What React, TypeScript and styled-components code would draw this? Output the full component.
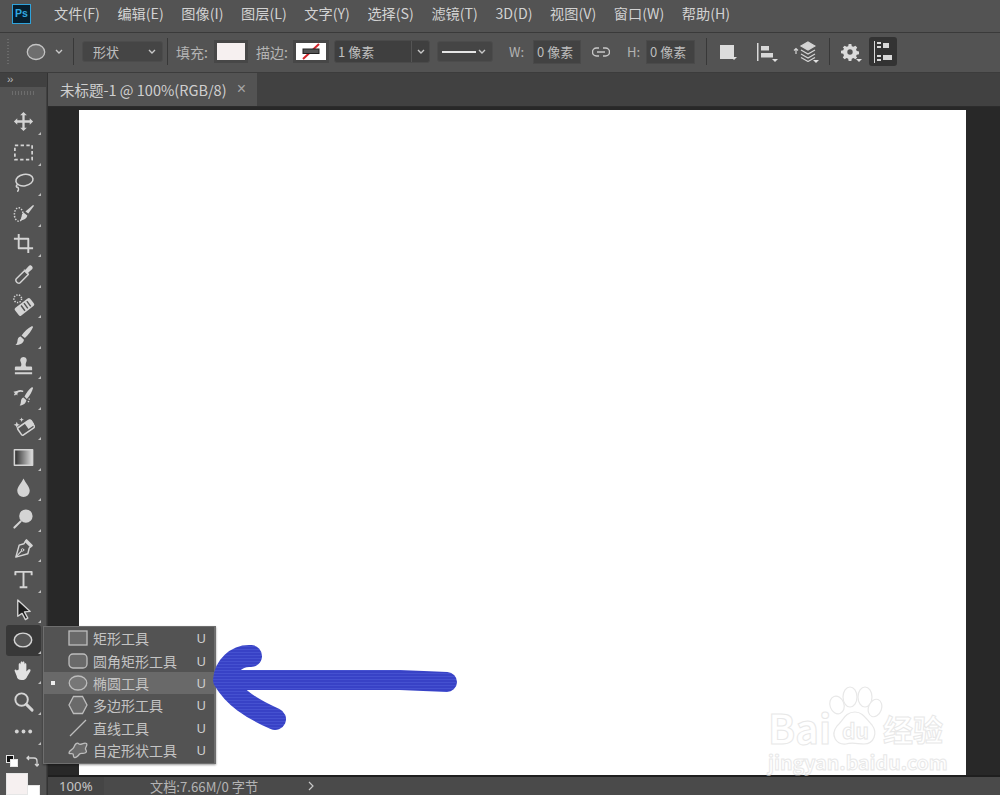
import React from "react";
import styled, { createGlobalStyle } from "styled-components";

const GlobalStyle = createGlobalStyle`
  html, body {
    margin: 0;
    padding: 0;
    background: #535353;
  }
  * {
    box-sizing: border-box;
  }
`;

const CJK = `"Noto Sans CJK SC", "Noto Sans", sans-serif`;
const ICON = "#d4d4d4";

const Window = styled("div")`
  position: relative;
  width: 1000px;
  height: 795px;
  overflow: hidden;
  display: flex;
  flex-direction: column;
  background: #535353;
  font-family: ${CJK};
  color: #cfcfcf;
`;

/* ---- menu ---- */
const MenuBar = styled("div")`
  height: 33px;
  flex: none;
  display: flex;
  align-items: center;
  padding-left: 12px;
  border-bottom: 1px solid #3a3a3a;
`;

const Logo = styled("div")`
  width: 19px;
  height: 20px;
  margin-right: 23px;
  margin-top: -5px;
  border: 1.5px solid #2fa3dc;
  background: #061e2e;
  color: #31a8e0;
  font: bold 10.5px/17px "Liberation Sans", sans-serif;
  text-align: center;
`;

const MenuItem = styled("span")`
  margin-right: 17.6px;
  font-size: 14.2px;
  line-height: 28px;
  margin-top: -6px;
  white-space: nowrap;
  color: #d2d2d2;
`;

/* ---- options bar ---- */
const OptionsBar = styled("div")`
  height: 40px;
  flex: none;
  display: flex;
  align-items: center;
  position: relative;
  padding-bottom: 2px;
  border-bottom: 1px solid #3c3c3c;
  font-size: 13px;
`;

const Slot = styled("div")<{ $x: number; $w: number }>`
  flex: none;
  margin-left: ${(p) => p.$x}px;
  width: ${(p) => p.$w}px;
  display: flex;
  align-items: center;
  justify-content: center;
`;

const Grip = styled("div")`
  width: 2px;
  height: 26px;
  margin-left: 7px;
  background: repeating-linear-gradient(#6b6b6b 0 1px, transparent 1px 3px);
`;

const Sep = styled("div")<{ $x: number }>`
  flex: none;
  width: 1px;
  height: 27px;
  margin-left: ${(p) => p.$x}px;
  background: #383838;
`;

const Select = styled("div")<{ $x: number; $w: number }>`
  flex: none;
  height: 21px;
  margin-left: ${(p) => p.$x}px;
  width: ${(p) => p.$w}px;
  display: flex;
  align-items: center;
  justify-content: space-between;
  padding: 0 5px 0 10px;
  background: #454545;
  border: 1px solid #4c4c4c;
  border-radius: 3px;
  color: #bdbdbd;
`;

const Label = styled("span")<{ $x: number; $w: number; $size?: number }>`
  flex: none;
  margin-left: ${(p) => p.$x}px;
  width: ${(p) => p.$w}px;
  font-size: ${(p) => p.$size ?? 14}px;
  color: #b4b4b4;
  white-space: nowrap;
`;

const Swatch = styled("div")<{ $x: number; $w: number; $fill: string }>`
  flex: none;
  position: relative;
  margin-left: ${(p) => p.$x}px;
  width: ${(p) => p.$w}px;
  height: 23px;
  border: 3px solid #474747;
  background: ${(p) => p.$fill};
`;

const ComboField = styled("div")`
  flex: none;
  margin-left: 5px;
  width: 96px;
  height: 23px;
  display: flex;
  background: #3f3f3f;
  border: 1px solid #4a4a4a;
  border-radius: 3px;
  color: #c0c0c0;
`;

const ComboText = styled("div")`
  flex: 1;
  padding-left: 3px;
  line-height: 21px;
  border-right: 1px solid #555;
`;

const ComboArrow = styled("div")`
  width: 17px;
  display: flex;
  align-items: center;
  justify-content: center;
`;

const LineSample = styled("span")`
  width: 34px;
  height: 2px;
  margin-left: -6px;
  background: #e6e6e6;
`;

const NumField = styled("div")<{ $x: number; $w: number }>`
  flex: none;
  margin-left: ${(p) => p.$x}px;
  width: ${(p) => p.$w}px;
  height: 24px;
  padding-left: 3px;
  background: #424242;
  border: 1px solid #4a4a4a;
  line-height: 22px;
  color: #bdbdbd;
`;

const ActiveOption = styled("div")`
  flex: none;
  margin-left: 10px;
  width: 28px;
  height: 29px;
  display: flex;
  align-items: center;
  justify-content: center;
  background: #333;
  border-radius: 3px;
`;

const Corner = styled("span")`
  position: absolute;
  right: -3px;
  bottom: -1px;
  width: 0;
  height: 0;
  border-left: 3px solid transparent;
  border-right: 3px solid transparent;
  border-top: 3px solid #e0e0e0;
`;

const OptIcon = styled("div")`
  position: relative;
  display: flex;
`;

/* ---- workspace ---- */
const Workspace = styled("div")`
  flex: 1;
  display: flex;
  min-height: 0;
`;

const ToolBar = styled("div")`
  width: 48px;
  flex: none;
  display: flex;
  background: #414141;
  border-right: 1px solid #333;
`;

const ToolColumn = styled("div")`
  width: 46px;
  display: flex;
  flex-direction: column;
  align-items: center;
  background: #535353;
  position: relative;
`;

const CollapseStrip = styled("div")`
  width: 100%;
  height: 14px;
  flex: none;
  background: #414141;
  color: #bbb;
  font: 11px/12px "Liberation Sans", sans-serif;
  padding-left: 7px;
  letter-spacing: -1px;
`;

const ToolGrip = styled("div")`
  width: 22px;
  height: 4px;
  flex: none;
  margin: 4px 0 11.5px;
  background: repeating-linear-gradient(90deg, #6d6d6d 0 1px, transparent 1px 3px);
`;

const ToolSlot = styled("div")<{ $active?: boolean }>`
  position: relative;
  flex: none;
  width: 35px;
  height: 30.5px;
  display: flex;
  align-items: center;
  justify-content: center;
  border-radius: 3px;
  background: ${(p) => (p.$active ? "#383838" : "transparent")};
  &::after {
    content: "";
    position: absolute;
    right: 0;
    bottom: 2px;
    border-style: solid;
    border-width: 0 0 3px 3px;
    border-color: transparent transparent #bdbdbd transparent;
  }
`;

const ColorWells = styled("div")`
  position: relative;
  width: 100%;
  flex: 1;
`;

const MiniWell = styled("div")<{ $x: number; $y: number; $size: number; $fill: string }>`
  position: absolute;
  left: ${(p) => p.$x}px;
  top: ${(p) => p.$y}px;
  width: ${(p) => p.$size}px;
  height: ${(p) => p.$size}px;
  background: ${(p) => p.$fill};
  border: 1px solid #e6e6e6;
`;

const SwapIcon = styled("svg")`
  position: absolute;
  left: 26px;
  top: 8px;
`;

const DocColumn = styled("div")`
  flex: 1;
  min-width: 0;
  display: flex;
  flex-direction: column;
`;

const TabStrip = styled("div")`
  height: 34px;
  flex: none;
  display: flex;
  background: #414141;
  border-bottom: 1px solid #2c2c2c;
`;

const Tab = styled("div")`
  width: 209px;
  display: flex;
  align-items: center;
  justify-content: space-between;
  padding: 0 11px 1px 12px;
  background: #535353;
  font-size: 14.5px;
  color: #cfcfcf;
  white-space: nowrap;
`;

const TabClose = styled("span")`
  font: 16px "Liberation Sans", sans-serif;
  color: #a5a5a5;
`;

const Pasteboard = styled("div")`
  flex: 1;
  min-height: 0;
  display: flex;
  justify-content: center;
  padding: 3px 34px 0 31px;
  background: #282828;
  border-bottom: 2px solid #1f1f1f;
`;

const Canvas = styled("div")`
  width: 100%;
  height: 100%;
  background: #fff;
`;

const StatusBar = styled("div")`
  height: 18px;
  flex: none;
  display: flex;
  align-items: center;
  background: #4a4a4a;
  font-size: 13.2px;
  color: #c4c4c4;
`;

const Zoom = styled("div")`
  width: 56px;
  height: 100%;
  padding-left: 11px;
  line-height: 19px;
  background: #454545;
  font-family: "Noto Sans", sans-serif;
`;

const DocInfo = styled("div")`
  width: 204px;
  padding-left: 46px;
  line-height: 19px;
  color: #b4b4b4;
  white-space: nowrap;
`;

const StatusArrow = styled("svg")`
  display: block;
`;

/* ---- flyout ---- */
const Flyout = styled("div")`
  position: absolute;
  left: 43px;
  top: 626px;
  width: 173px;
  height: 138px;
  background: #535353;
  border: 1px solid #6e6e6e;
  border-right-width: 2px;
  box-shadow: 0 1px 2px rgba(0, 0, 0, 0.4);
`;

const FlyRow = styled("div")<{ $active?: boolean }>`
  height: 22.4px;
  display: flex;
  align-items: center;
  background: ${(p) => (p.$active ? "#696969" : "transparent")};
  color: #c4c4c4;
  font-size: 14px;
  white-space: nowrap;
`;

const Bullet = styled("span")<{ $show?: boolean }>`
  width: 4px;
  height: 4px;
  margin-left: 7px;
  flex: none;
  background: ${(p) => (p.$show ? "#eee" : "transparent")};
`;

const FlyIcon = styled("span")`
  width: 20px;
  height: 20px;
  margin-left: 13px;
  margin-right: 5px;
  flex: none;
  display: flex;
`;

const FlyKey = styled("span")`
  margin-left: auto;
  margin-right: 8px;
  font: 13px "Noto Sans", sans-serif;
  color: #cfcfcf;
`;

/* ---- drawn on top of the canvas ---- */
const ArrowMark = styled("svg")`
  position: absolute;
  left: 205px;
  top: 635px;
`;

const Watermark = styled("div")`
  position: absolute;
  left: 767px;
  top: 686px;
  width: 185px;
  height: 88px;
`;

const WatermarkPaw = styled("svg")`
  position: absolute;
  left: 60px;
  top: 0;
`;

const OutlineText = styled("span")<{ $x: number; $y: number; $size: number }>`
  position: absolute;
  left: ${(p) => p.$x}px;
  top: ${(p) => p.$y}px;
  font-size: ${(p) => p.$size}px;
  line-height: 1;
  font-weight: 700;
  color: #fff;
  -webkit-text-stroke: 1px #e8e8e8;
  white-space: nowrap;
`;

const Svg = ({ size = 24, children }: { size?: number; children: React.ReactNode }) => (
  <svg
    width={size}
    height={size}
    viewBox="0 0 24 24"
    fill="none"
    stroke={ICON}
    strokeWidth="1.6"
    strokeLinecap="round"
    strokeLinejoin="round"
  >
    {children}
  </svg>
);

const tools: React.ReactNode[] = [
  // move
  <path d="M12 2l3.500 3.500h-2.300v5.300h5.300V8.500L22 12l-3.500 3.500v-2.300h-5.300v5.300h2.300L12 22l-3.500-3.500h2.300v-5.300H5.500v2.300L2 12l3.500-3.500v2.300h5.300V5.500H8.500z" fill={ICON} stroke="none" />,
  // marquee
  <rect x="3" y="4.500" width="18" height="15" strokeDasharray="3.500 2.500" strokeWidth="1.8" strokeLinecap="butt" />,
  // lasso
  <>
    <ellipse cx="13" cy="9.500" rx="9" ry="6" transform="rotate(-10 13 9.500)" />
    <path d="M6 14c-2 1-2 3 0 3 1 1 1 3 0 4" />
  </>,
  // quick selection
  <>
    <ellipse cx="7" cy="13" rx="4.500" ry="7" strokeDasharray="1.500 1.500" strokeLinecap="butt" />
    <path d="M22 3l1 1-6 8-3-2z" fill={ICON} stroke="none" />
    <path d="M12 11l4 3c-.5 3-3.500 5-7.500 5 2-2 1-6.500 3.500-8z" fill={ICON} stroke="none" />
  </>,
  // crop
  <path d="M7 2v15h15M2 7h15v15" strokeWidth="2" strokeLinecap="butt" />,
  // eyedropper
  <>
    <path d="M13 8l4 4-8.500 8.500c-2 2-6-2-4-4z" strokeWidth="1.500" />
    <path d="M12 6.500l2 .5 3.500-4c2-2 5.500 1.500 3.500 3.500l-4 3.500.5 2z" fill={ICON} stroke="none" />
  </>,
  // healing brush
  <>
    <circle cx="6" cy="6" r="4" strokeDasharray="1.400 1.400" strokeLinecap="butt" />
    <rect x="3" y="9.500" width="20" height="10" rx="2" transform="rotate(-38 13 14.500)" fill={ICON} stroke="none" />
    <path d="M9.500 13l4 5.500M12.500 10.500l4 5.500M15.500 8.500l4 5.500" stroke="#535353" strokeWidth="1.500" strokeLinecap="butt" />
  </>,
  // brush
  <path d="M21 2l1 1c-1.500 4-5 8-8.500 11.500L10 12c2.500-4 7-8 11-10zM9 13l3.500 3.500c-.5 3.500-4 5.500-9 5.500 2.500-1.500 2-4 2.500-6 .5-2 2-3 3-3z" fill={ICON} stroke="none" />,
  // stamp
  <path d="M12 3c3 0 4 3 3 5-1 2-1 4 0 5h5c1 0 1 1 1 2v2H3v-2c0-1 0-2 1-2h5c1-1 1-3 0-5-1-2 0-5 3-5zM3 19h18v2H3z" fill={ICON} stroke="none" />,
  // history brush
  <>
    <path d="M21 2l1 1c-1 4-3.500 8-6.500 11.500L13 12c2-4 5-8 8-10zM12 13l3 3c-.5 3-3 5.500-7 5.500 1.500-1.500 1-3.500 1.500-5.500.5-2 1.500-3 2.500-3z" fill={ICON} stroke="none" />
    <path d="M3 10c2-3 5-4.500 8-3.500" />
    <path d="M1.500 7L6 6 5.500 11z" fill={ICON} stroke="none" />
    <path d="M18 14c0 2-1 4-2 5" strokeDasharray="1.200 1.500" strokeLinecap="butt" />
  </>,
  // eraser
  <>
    <path d="M5 7l1 2.300 2.300 1-2.300 1-1 2.300-1-2.300-2.300-1 2.300-1zM10 2.500l.7 1.700 1.700.7-1.700.7L10 7.300l-.7-1.700L7.600 4.900l1.700-.7z" fill={ICON} stroke="none" />
    <rect x="6.500" y="8.500" width="16" height="9.500" rx="1.500" transform="rotate(-35 14.500 13)" fill="#535353" />
    <path d="M13 8.500l5-3.500c1-.7 2-.5 2.700.5l2 3c.7 1 .5 2-.5 2.700l-5 3.500z" fill={ICON} stroke="none" />
  </>,
  // gradient
  <>
    <defs>
      <linearGradient id="tool-grad">
        <stop offset="0" stopColor="#2a2a2a" />
        <stop offset="1" stopColor="#e0e0e0" />
      </linearGradient>
    </defs>
    <rect x="2.500" y="4" width="19" height="16" fill="url(#tool-grad)" strokeLinecap="butt" />
  </>,
  // blur
  <path d="M12 2.500c2 4.500 6.500 8.500 6.500 13a6.500 6.500 0 0 1-13 0c0-4.500 4.500-8.500 6.500-13z" fill={ICON} stroke="none" />,
  // dodge
  <>
    <circle cx="14.500" cy="9.500" r="7" fill={ICON} stroke="none" />
    <path d="M9 15l-6.500 6.500" strokeWidth="2.200" />
  </>,
  // pen
  <>
    <path d="M15 3l6 6-3 2.500-1.500 6L4 21l3.500-12.500 5-1.500z" strokeWidth="1.500" />
    <path d="M5 20l5-5.500" strokeWidth="1.200" />
    <circle cx="11" cy="13.500" r="1.300" strokeWidth="1" />
    <path d="M14.500 4.500l5 5" strokeWidth="2.500" />
  </>,
  // type
  <path d="M3.500 7.500V4h17v3.500M12 4v16M8 20h8" strokeWidth="2" strokeLinecap="butt" />,
  // path selection
  <path d="M6 2l13 12-6 .5 3.500 6.500-2.500 1.500-3.500-6.500L6 19z" fill="#1d1d1d" stroke={ICON} strokeWidth="1.400" />,
  // ellipse, active
  <ellipse cx="12" cy="12" rx="9.500" ry="7.500" fill="#555" />,
  // hand
  <path d="M7 11V6c0-2 2-2 2 0v3-5c0-2 2-2 2 0v5-5c0-2 2-2 2 0v5-3c0-2 2-2 2 0v7l2-2c2-1 3 0 2 2l-3 5c-1 3-3 4-6 4-3 0-5-2-5-4l-2-5c-1-2 1-3 2-1z" fill="#e2e2e2" stroke="none" />,
  // zoom
  <>
    <circle cx="10" cy="10" r="6.500" strokeWidth="2" />
    <path d="M15 15l6 6" strokeWidth="3" />
  </>,
  // more
  <>
    <circle cx="5" cy="12" r="2" fill={ICON} stroke="none" />
    <circle cx="12" cy="12" r="2" fill={ICON} stroke="none" />
    <circle cx="19" cy="12" r="2" fill={ICON} stroke="none" />
  </>,
];

const FLY_STROKE = "#bdbdbd";

const flyIcon = (inner: React.ReactNode) => (
  <svg width="20" height="20" viewBox="0 0 20 20" fill="#6a6a6a" stroke={FLY_STROKE} strokeWidth="1.300">
    {inner}
  </svg>
);

const shapes = [
  { name: "矩形工具", icon: flyIcon(<rect x="1" y="3" width="18" height="14" />) },
  { name: "圆角矩形工具", icon: flyIcon(<rect x="1" y="3" width="18" height="14" rx="4" />) },
  { name: "椭圆工具", active: true, icon: flyIcon(<ellipse cx="10" cy="10" rx="8.800" ry="7" fill="#777" />) },
  { name: "多边形工具", icon: flyIcon(<path d="M5.500 1.500h9L19 10l-4.500 8.500h-9L1 10z" />) },
  { name: "直线工具", icon: flyIcon(<path d="M2 18L18 2" fill="none" />) },
  {
    name: "自定形状工具",
    icon: flyIcon(
      <path d="M1 13c0-3 4-3 5-6 1-3 3-5 5-3 1.500 1.500 5-2 7.500-.5 1.500 1.500-1.500 4-1 5.500.5 1.500 2 3-.5 4-2.500 1-4-.5-5.500 1-1.500 2-3 4-5 3.500-2-.5-.5-2.500-1.500-3.500-1-1-4 .5-4-1z" />
    ),
  },
];

const menus = ["文件(F)", "编辑(E)", "图像(I)", "图层(L)", "文字(Y)", "选择(S)", "滤镜(T)", "3D(D)", "视图(V)", "窗口(W)", "帮助(H)"];

const Chevron = () => (
  <svg width="10" height="8" viewBox="0 0 10 8" fill="none" stroke="#c8c8c8" strokeWidth="1.400">
    <path d="M2 2l3 3 3-3" />
  </svg>
);

const ArrowStroke = () => (
  <ArrowMark width="260" height="100" viewBox="205 635 260 100" fill="none">
    <defs>
      <pattern id="brush-lines" width="7" height="3" patternUnits="userSpaceOnUse">
        <rect width="7" height="3" fill="#3743c6" />
        <rect y="1" width="7" height="1" fill="#4551d0" />
      </pattern>
      <filter id="brush-rough" filterUnits="userSpaceOnUse" x="205" y="635" width="260" height="100">
        <feTurbulence type="fractalNoise" baseFrequency="0.03" numOctaves="1" seed="7" />
        <feDisplacementMap in="SourceGraphic" scale="2" />
      </filter>
    </defs>
    <g stroke="url(#brush-lines)" strokeLinecap="round" strokeLinejoin="round" filter="url(#brush-rough)">
      <path d="M251 656C236 655 225 667 224 680C234 697 250 708 275 719" strokeWidth="22" />
      <path d="M228 680L400 680L447 682" strokeWidth="20" />
    </g>
  </ArrowMark>
);

const BaiduMark = () => (
  <Watermark>
    <WatermarkPaw width="56" height="60" viewBox="0 0 56 60" fill="#fff" stroke="#e8e8e8" strokeWidth="1.200">
      <ellipse cx="10" cy="19" rx="7" ry="9" transform="rotate(-20 10 19)" />
      <ellipse cx="23" cy="11" rx="7" ry="10" />
      <ellipse cx="38" cy="11" rx="7" ry="10" />
      <ellipse cx="48" cy="22" rx="6.500" ry="9" transform="rotate(20 48 22)" />
      <path d="M28 26c8 0 11 7 17 13 6 8 2 19-8 19-6 0-12-2-18 0-10 1-16-9-9-18 6-5 8-14 18-14z" />
    </WatermarkPaw>
    <OutlineText $x={1} $y={21} $size={40}>Bai</OutlineText>
    <OutlineText $x={75} $y={34} $size={21}>du</OutlineText>
    <OutlineText $x={116} $y={27} $size={30}>经验</OutlineText>
    <OutlineText $x={1} $y={66} $size={19.600}>jingyan.baidu.com</OutlineText>
  </Watermark>
);

const App = () => (
  <Window>
    <GlobalStyle />
    <MenuBar>
      <Logo>Ps</Logo>
      {menus.map((m) => (
        <MenuItem key={m}>{m}</MenuItem>
      ))}
    </MenuBar>

    <OptionsBar>
      <Grip />
      <Slot $x={17} $w={20}>
        <svg width="20" height="18" viewBox="0 0 20 18">
          <ellipse cx="10" cy="9" rx="8.700" ry="7.500" fill="#6e6e6e" stroke="#c4c4c4" strokeWidth="1.300" />
        </svg>
      </Slot>
      <Slot $x={8} $w={10}>
        <Chevron />
      </Slot>
      <Sep $x={9} />
      <Select $x={8} $w={81}>
        形状
        <Chevron />
      </Select>
      <Sep $x={4} />
      <Label $x={8} $w={33}>填充:</Label>
      <Swatch $x={5} $w={34} $fill="#f6f0f0" />
      <Label $x={8} $w={33}>描边:</Label>
      <Swatch $x={4} $w={36} $fill="#fff">
        <svg width="30" height="17" viewBox="0 0 30 17">
          <path d="M7 16L23 1" stroke="#d3252a" strokeWidth="2" />
          <rect x="7" y="6" width="16" height="4.500" fill="#555" stroke="#222" strokeWidth="1" />
        </svg>
      </Swatch>
      <ComboField>
        <ComboText>1 像素</ComboText>
        <ComboArrow>
          <Chevron />
        </ComboArrow>
      </ComboField>
      <Select $x={7} $w={56}>
        <LineSample />
        <Chevron />
      </Select>
      <Label $x={16} $w={16} $size={13}>W:</Label>
      <NumField $x={8} $w={48}>0 像素</NumField>
      <Slot $x={11} $w={18}>
        <svg width="18" height="12" viewBox="0 0 18 12" fill="none" stroke="#c8c8c8" strokeWidth="1.400">
          <path d="M7 2H4.500a4 4 0 0 0 0 8H7M11 2h2.500a4 4 0 0 1 0 8H11M5 6h8" />
        </svg>
      </Slot>
      <Label $x={17} $w={13} $size={13}>H:</Label>
      <NumField $x={6} $w={49}>0 像素</NumField>
      <Sep $x={11} />
      <Slot $x={13} $w={14}>
        <OptIcon>
          <svg width="14" height="14" viewBox="0 0 14 14">
            <rect width="14" height="14" fill="#dcdcdc" />
          </svg>
          <Corner />
        </OptIcon>
      </Slot>
      <Slot $x={22} $w={20}>
        <OptIcon>
          <svg width="18" height="18" viewBox="0 0 18 18" fill="#d8d8d8">
            <rect x="0" y="0" width="1.500" height="18" />
            <rect x="4" y="3" width="8" height="4.500" />
            <rect x="4" y="10" width="12" height="4.500" />
          </svg>
          <Corner />
        </OptIcon>
      </Slot>
      <Slot $x={17} $w={23}>
        <OptIcon>
          <svg width="23" height="21" viewBox="0 0 23 21" fill="none" stroke="#d4d4d4" strokeWidth="1.200">
            <path d="M3 13V8M1 9.500l2-2 2 2" />
            <path d="M15 1l7 4-7 4-7-4z" fill="#d4d4d4" />
            <path d="M8 9l7 4 7-4M8 13l7 4 7-4M8 16.500l7 4 7-4" />
          </svg>
          <Corner />
        </OptIcon>
      </Slot>
      <Sep $x={13} />
      <Slot $x={11} $w={18}>
        <OptIcon>
          <svg width="18" height="18" viewBox="-1 0 20 18" fill="#dadada">
            <path d="M7.500 0h3l.5 2.500 1.800.8L15 2l2 2-1.300 2.200.8 1.800 2.500.5v3l-2.500.5-.8 1.800L17 15l-2 2-2.200-1.300-1.800.8-.5 2.500h-3l-.5-2.500-1.800-.8L3 17l-2-2 1.300-2.200-.8-1.800L-1 10.500v-3l2.500-.5.800-1.800L1 4l2-2 2.200 1.300L7 2.500zM9 6a3 3 0 1 0 0 6 3 3 0 0 0 0-6z" fillRule="evenodd" />
          </svg>
          <Corner />
        </OptIcon>
      </Slot>
      <ActiveOption>
        <svg width="18" height="22" viewBox="0 0 18 22" fill="#d8d8d8">
          <rect x="0" y="0" width="1" height="22" />
          <rect x="3" y="1" width="4" height="2" />
          <rect x="3" y="5" width="4" height="2" />
          <rect x="3" y="14" width="4" height="2" />
          <rect x="3" y="18" width="4" height="2" />
          <rect x="9" y="2" width="6" height="5" />
          <rect x="9" y="14" width="9" height="5" />
        </svg>
      </ActiveOption>
    </OptionsBar>

    <Workspace>
      <ToolBar>
        <ToolColumn>
          <CollapseStrip>››</CollapseStrip>
          <ToolGrip />
          {tools.map((icon, i) => (
            <ToolSlot key={i} $active={i === 17}>
              <Svg size={i === 17 ? 22 : 23}>{icon}</Svg>
            </ToolSlot>
          ))}
          <ColorWells>
            <MiniWell $x={6} $y={8} $size={8} $fill="#111" />
            <MiniWell $x={10} $y={12} $size={8} $fill="#fff" />
            <SwapIcon width="13" height="12" viewBox="0 0 13 12" fill="none" stroke="#d4d4d4" strokeWidth="1.300">
              <path d="M1 3h7a3 3 0 0 1 3 3v5M3 1L1 3l2 2M9 9l2 2 2-2" />
            </SwapIcon>
            <MiniWell $x={22} $y={38} $size={18} $fill="#fff" />
            <MiniWell $x={6} $y={26} $size={22} $fill="#f6f0f0" />
          </ColorWells>
        </ToolColumn>
      </ToolBar>

      <DocColumn>
        <TabStrip>
          <Tab>
            未标题-1 @ 100%(RGB/8)
            <TabClose>×</TabClose>
          </Tab>
        </TabStrip>
        <Pasteboard>
          <Canvas />
        </Pasteboard>
        <StatusBar>
          <Zoom>100%</Zoom>
          <DocInfo>文档:7.66M/0 字节</DocInfo>
          <StatusArrow width="6" height="10" viewBox="0 0 6 10" fill="none" stroke="#c8c8c8" strokeWidth="1.200">
            <path d="M1 1l4 4-4 4" />
          </StatusArrow>
        </StatusBar>
      </DocColumn>
    </Workspace>

    <Flyout>
      {shapes.map((s) => (
        <FlyRow key={s.name} $active={s.active}>
          <Bullet $show={s.active} />
          <FlyIcon>{s.icon}</FlyIcon>
          {s.name}
          <FlyKey>U</FlyKey>
        </FlyRow>
      ))}
    </Flyout>

    <ArrowStroke />
    <BaiduMark />
  </Window>
);

export default App;
